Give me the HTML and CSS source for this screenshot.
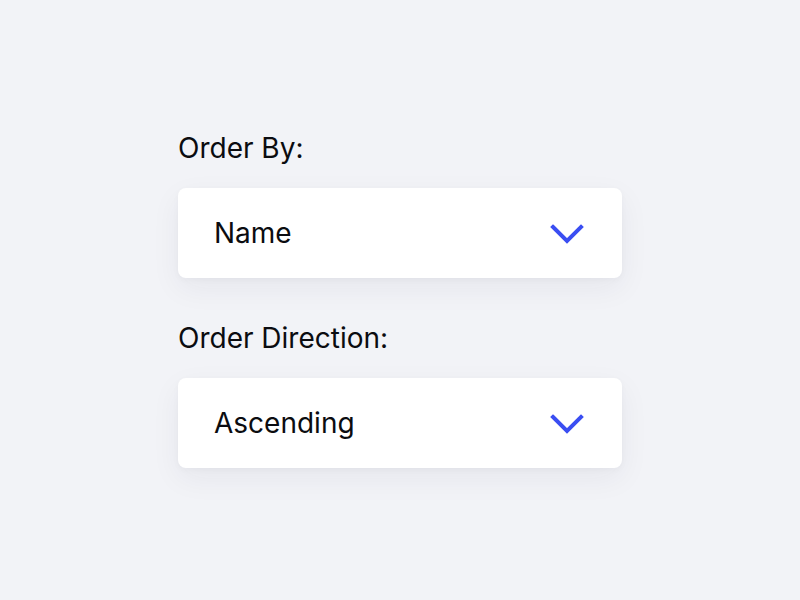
FILE: index.html
```html
<!DOCTYPE html>
<html>
<head>
<meta charset="utf-8">
<link rel="stylesheet" href="styles.css">
</head>
<body>
<div class="form">
  <div class="field">
    <div class="label">Order By:</div>
    <div class="select">
      <span class="value">Name</span>
      <svg class="chevron" width="34" height="20" viewBox="0 0 34 20"><path d="M3 3 L17 17 L31 3" fill="none" stroke="#3a4ef2" stroke-width="4" stroke-linecap="square" stroke-linejoin="miter"/></svg>
    </div>
  </div>
  <div class="field">
    <div class="label">Order Direction:</div>
    <div class="select">
      <span class="value">Ascending</span>
      <svg class="chevron" width="34" height="20" viewBox="0 0 34 20"><path d="M3 3 L17 17 L31 3" fill="none" stroke="#3a4ef2" stroke-width="4" stroke-linecap="square" stroke-linejoin="miter"/></svg>
    </div>
  </div>
</div>
</body>
</html>
```
FILE: styles.css
```css
html, body {
  margin: 0;
  padding: 0;
  background: #f2f3f7;
  width: 800px;
  height: 600px;
  overflow: hidden;
}
body {
  font-family: Inter, "Noto Sans", sans-serif;
  color: #0b0c10;
}
.form {
  width: 444px;
  margin-left: 178px;
  padding-top: 131px;
  display: flex;
  flex-direction: column;
  gap: 43px;
}
.field {
  display: flex;
  flex-direction: column;
  gap: 23px;
}
.label {
  font-size: 28px;
  line-height: 34px;
}
.select {
  height: 90px;
  background: #ffffff;
  border-radius: 8px;
  box-shadow: 0 10px 30px rgba(30, 35, 60, 0.06), 0 2px 6px rgba(30, 35, 60, 0.03);
  display: flex;
  align-items: center;
  justify-content: space-between;
  padding: 0 38px 0 36px;
}
.value {
  font-size: 28px;
  line-height: 34px;
}
.chevron {
  display: block;
  margin-top: 2px;
}
```
